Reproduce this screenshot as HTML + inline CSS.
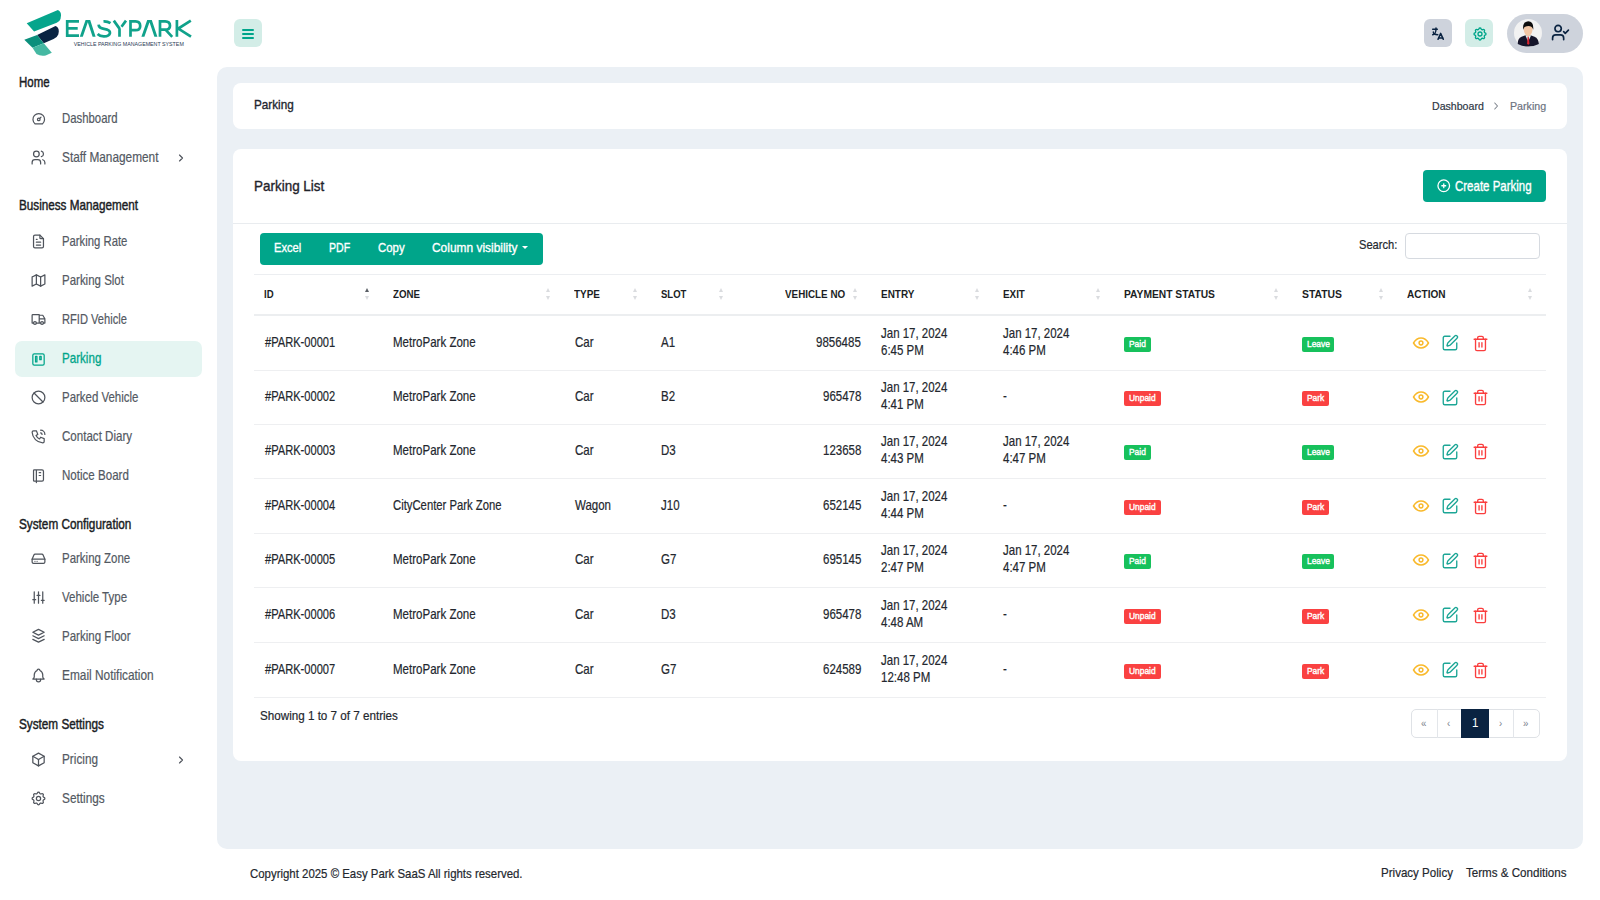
<!DOCTYPE html>
<html><head><meta charset="utf-8"><title>Parking</title>
<style>
html,body{margin:0;padding:0;}
body{width:1600px;height:900px;position:relative;overflow:hidden;background:#fff;font-family:"Liberation Sans",sans-serif;}
.t{position:absolute;white-space:nowrap;line-height:20px;}
svg{display:block;}
</style></head><body>
<svg style="position:absolute;left:0;top:0" width="200" height="64" viewBox="0 0 200 64">
<path d="M26.7 23.3 L57.9 9.9 Q61.3 11.5 61 15.5 L60.5 19 Q59.5 22 56.7 22.8 L34.1 31.6 Z" fill="#06a58c"/>
<path d="M37.1 35 L55.5 26.1 Q58.9 27.5 58.8 31.5 L58.3 34.5 Q57 37.8 53.6 38.9 L43.8 43.2 Z" fill="#0a2442"/>
<path d="M24.3 39.8 L37.1 35 L43.8 43.2 L32.5 47.8 Z" fill="#0b8f7c"/>
<path d="M32.5 47.8 L43.8 43.2 L51.8 52.7 L45.7 55.4 Q40.5 56.5 36.5 53.9 Z" fill="#45b8a2"/>
<g fill="#10a28b">
<path d="M79.8 36.8 L85.6 20.1 L90.2 20.1 L95.6 36.8 L92.6 36.8 L87.8 22.3 L82.8 36.8 Z"/>
<path d="M141.4 36.8 L147.2 20.1 L151.8 20.1 L157.4 36.8 L154.4 36.8 L149.5 22.3 L144.4 36.8 Z"/>
</g>
<g fill="none" stroke="#10a28b" stroke-width="2.7" stroke-linecap="butt" stroke-linejoin="miter">
<path d="M79 21.35 H67.2 V35.55 H79 M67.2 28.4 H77.7"/>
<path d="M103.5 21.4 Q107.5 21.2 110.5 23.2 M98.6 24.6 Q98.8 28.1 104 28.9 Q110.2 29.8 110 33 Q109.3 36.5 103.8 36.4 Q99.8 36.3 97.6 34"/>
<path d="M113.8 20.6 L119.5 28.6 M126 20.6 L121.5 26.8 M119.5 28.2 V36.8"/>
<path d="M130.5 36.8 V21.35 H135.5 Q140.2 21.5 140.2 25.9 Q140.2 30.2 135.5 30.2 H130.5"/>
<path d="M160 36.8 V21.35 H165.2 Q170 21.5 170 25.7 Q170 29.6 165.2 29.6 H160 M165.5 29.6 L172.2 36.8"/>
<path d="M176.9 20.1 V36.8 M190.8 20.6 L178.3 28.6 L191 36.6"/>
</g>
<text x="73.8" y="45.6" font-family="Liberation Sans" font-size="6.1" fill="#2a3a55" textLength="110" lengthAdjust="spacingAndGlyphs">VEHICLE PARKING MANAGEMENT SYSTEM</text>
</svg>
<div style="position:absolute;left:233.5px;top:19px;width:28px;height:28px;background:#d3ede7;border-radius:6px;"></div>
<div style="position:absolute;left:241.5px;top:29.1px;width:12.8px;height:1.8px;background:#00a58a;border-radius:1px;"></div>
<div style="position:absolute;left:241.5px;top:33.300000000000004px;width:12.8px;height:1.8px;background:#00a58a;border-radius:1px;"></div>
<div style="position:absolute;left:241.5px;top:37.4px;width:12.8px;height:1.8px;background:#00a58a;border-radius:1px;"></div>
<div style="position:absolute;left:1423.5px;top:19px;width:28px;height:28px;background:#ced3dc;border-radius:6px;"></div>
<div style="position:absolute;left:1465px;top:19px;width:28px;height:28px;background:#d3ede7;border-radius:6px;"></div>
<div style="position:absolute;left:1507px;top:13.5px;width:76px;height:39.5px;background:#ced3dc;border-radius:20px;"></div>
<svg style="position:absolute;left:1430.00px;top:26.30px" width="16" height="16" viewBox="0 0 24 24" fill="none" stroke="#0a2341" stroke-width="2.2" stroke-linecap="round" stroke-linejoin="round"><path d="M4 5h7"/><path d="M9 3v2c0 4.418 -2.239 8 -5 8"/><path d="M5 9c0 2.144 2.952 3.908 6.7 4"/><path d="M12 20l4 -9l4 9"/><path d="M19.1 18h-6.2"/></svg>
<svg style="position:absolute;left:1471.50px;top:26.00px" width="16" height="16" viewBox="0 0 24 24" fill="none" stroke="#00a58a" stroke-width="2" stroke-linecap="round" stroke-linejoin="round"><path d="M10.325 4.317c.426 -1.756 2.924 -1.756 3.35 0a1.724 1.724 0 0 0 2.573 1.066c1.543 -.94 3.31 .826 2.37 2.37a1.724 1.724 0 0 0 1.065 2.572c1.756 .426 1.756 2.924 0 3.35a1.724 1.724 0 0 0 -1.066 2.573c.94 1.543 -.826 3.31 -2.37 2.37a1.724 1.724 0 0 0 -2.572 1.065c-.426 1.756 -2.924 1.756 -3.35 0a1.724 1.724 0 0 0 -2.573 -1.066c-1.543 .94 -3.31 -.826 -2.37 -2.37a1.724 1.724 0 0 0 -1.065 -2.572c-1.756 -.426 -1.756 -2.924 0 -3.35a1.724 1.724 0 0 0 1.066 -2.573c-.94 -1.543 .826 -3.31 2.37 -2.37c1 .608 2.296 .07 2.572 -1.065z"/><path d="M9 12a3 3 0 1 0 6 0a3 3 0 0 0 -6 0"/></svg>
<svg style="position:absolute;left:1514px;top:19px" width="28" height="28" viewBox="0 0 28 28">
<circle cx="14" cy="14" r="14" fill="#f2f2f2"/>
<path d="M3.8 25 Q3.6 19.5 7.5 17.8 L11.5 16.2 L16.5 16.2 L20.5 17.8 Q24.6 19.5 24.9 25 Q19.5 27.6 14.3 27.6 Q9 27.6 3.8 25 Z" fill="#15142a"/>
<path d="M11.3 16.3 L14.2 22.5 L17.2 16.3 Z" fill="#dff1f3"/>
<path d="M13.6 17.4 L14.8 17.4 L15.4 24.5 L14.2 26 L13.1 24.5 Z" fill="#d7222d"/>
<path d="M9.6 6.5 Q9.2 16 14.2 17.6 Q19.2 16 18.8 6.5 Z" fill="#f2c7a6"/>
<path d="M9.2 10.8 Q8.3 2.6 14.2 2.3 Q20 2.6 19.2 10.8 Q18.6 7 14.2 7 Q9.8 7 9.2 10.8 Z" fill="#0d0d0d"/>
</svg>
<svg style="position:absolute;left:1551.10px;top:23.10px" width="19" height="19" viewBox="0 0 24 24" fill="none" stroke="#0a2341" stroke-width="2.1" stroke-linecap="round" stroke-linejoin="round"><path d="M16 21v-2a4 4 0 0 0-4-4H6a4 4 0 0 0-4 4v2"/><path d="M9 7m-4 0a4 4 0 1 0 8 0a4 4 0 1 0 -8 0"/><path d="m16 11 2 2 4-4"/></svg>
<div style="position:absolute;left:15px;top:341px;width:186.5px;height:35.5px;background:#e5f5f2;border-radius:7px;"></div>
<div class="t" style="left:18.80px;top:71.61px;font-size:14.4px;color:#1a1d24;transform:scaleX(0.7966);transform-origin:0 0;-webkit-text-stroke:0.45px #1a1d24;">Home</div>
<div class="t" style="left:18.80px;top:195.01px;font-size:14.4px;color:#1a1d24;transform:scaleX(0.8124);transform-origin:0 0;-webkit-text-stroke:0.45px #1a1d24;">Business Management</div>
<div class="t" style="left:18.80px;top:513.61px;font-size:14.4px;color:#1a1d24;transform:scaleX(0.8165);transform-origin:0 0;-webkit-text-stroke:0.45px #1a1d24;">System Configuration</div>
<div class="t" style="left:18.80px;top:713.71px;font-size:14.4px;color:#1a1d24;transform:scaleX(0.8160);transform-origin:0 0;-webkit-text-stroke:0.45px #1a1d24;">System Settings</div>
<div class="t" style="left:61.80px;top:108.18px;font-size:14.2px;color:#535962;transform:scaleX(0.8004);transform-origin:0 0;-webkit-text-stroke:0.2px #535962;">Dashboard</div>
<svg style="position:absolute;left:30.75px;top:110.65px" width="15.5" height="15.5" viewBox="0 0 24 24" fill="none" stroke="#4f545c" stroke-width="1.9" stroke-linecap="round" stroke-linejoin="round"><path d="M12 13m-2 0a2 2 0 1 0 4 0a2 2 0 1 0 -4 0"/><path d="M13.45 11.55l2.05 -2.05"/><path d="M6.4 20a9 9 0 1 1 11.2 0z"/></svg>
<div class="t" style="left:61.80px;top:147.18px;font-size:14.2px;color:#535962;transform:scaleX(0.8335);transform-origin:0 0;-webkit-text-stroke:0.2px #535962;">Staff Management</div>
<svg style="position:absolute;left:30.00px;top:149.40px" width="17" height="17" viewBox="0 0 24 24" fill="none" stroke="#4f545c" stroke-width="1.75" stroke-linecap="round" stroke-linejoin="round"><path d="M9 7m-4 0a4 4 0 1 0 8 0a4 4 0 1 0 -8 0"/><path d="M3 21v-2a4 4 0 0 1 4 -4h4a4 4 0 0 1 4 4v2"/><path d="M16 3.13a4 4 0 0 1 0 7.75"/><path d="M21 21v-2a4 4 0 0 0 -3 -3.85"/></svg>
<svg style="position:absolute;left:174.80px;top:152.00px" width="12" height="12" viewBox="0 0 24 24" fill="none" stroke="#4f545c" stroke-width="2.3" stroke-linecap="round" stroke-linejoin="round"><path d="M9 6l6 6l-6 6"/></svg>
<div class="t" style="left:61.80px;top:230.58px;font-size:14.2px;color:#535962;transform:scaleX(0.7967);transform-origin:0 0;-webkit-text-stroke:0.2px #535962;">Parking Rate</div>
<svg style="position:absolute;left:30.00px;top:232.80px" width="17" height="17" viewBox="0 0 24 24" fill="none" stroke="#4f545c" stroke-width="1.75" stroke-linecap="round" stroke-linejoin="round"><path d="M14 3v4a1 1 0 0 0 1 1h4"/><path d="M17 21h-10a2 2 0 0 1 -2 -2v-14a2 2 0 0 1 2 -2h7l5 5v11a2 2 0 0 1 -2 2z"/><path d="M9 9l1 0"/><path d="M9 13l6 0"/><path d="M9 17l6 0"/></svg>
<div class="t" style="left:61.80px;top:269.68px;font-size:14.2px;color:#535962;transform:scaleX(0.8098);transform-origin:0 0;-webkit-text-stroke:0.2px #535962;">Parking Slot</div>
<svg style="position:absolute;left:30.00px;top:271.90px" width="17" height="17" viewBox="0 0 24 24" fill="none" stroke="#4f545c" stroke-width="1.75" stroke-linecap="round" stroke-linejoin="round"><path d="M3 7l6 -3l6 3l6 -3v13l-6 3l-6 -3l-6 3v-13"/><path d="M9 4v13"/><path d="M15 7v13"/></svg>
<div class="t" style="left:61.80px;top:308.68px;font-size:14.2px;color:#535962;transform:scaleX(0.7844);transform-origin:0 0;-webkit-text-stroke:0.2px #535962;">RFID Vehicle</div>
<svg style="position:absolute;left:30.00px;top:310.90px" width="17" height="17" viewBox="0 0 24 24" fill="none" stroke="#4f545c" stroke-width="1.75" stroke-linecap="round" stroke-linejoin="round"><path d="M7 17m-2 0a2 2 0 1 0 4 0a2 2 0 1 0 -4 0"/><path d="M17 17m-2 0a2 2 0 1 0 4 0a2 2 0 1 0 -4 0"/><path d="M5 17h-2v-11a1 1 0 0 1 1 -1h9v12m-4 0h6m4 0h2v-6h-8m0 -5h5l3 5"/></svg>
<div class="t" style="left:61.80px;top:348.08px;font-size:14.2px;color:#00a58a;transform:scaleX(0.8183);transform-origin:0 0;-webkit-text-stroke:0.3px #00a58a;">Parking</div>
<svg style="position:absolute;left:30.00px;top:350.90px" width="17" height="17" viewBox="0 0 24 24" fill="none" stroke="#00a58a" stroke-width="1.75" stroke-linecap="round" stroke-linejoin="round"><path d="M4 4m0 2a2 2 0 0 1 2 -2h12a2 2 0 0 1 2 2v12a2 2 0 0 1 -2 2h-12a2 2 0 0 1 -2 -2z"/><path d="M7.8 7.6h2v7.8h-2z"/><path d="M13.8 7.6h2v4.6h-2z"/></svg>
<div class="t" style="left:61.80px;top:387.18px;font-size:14.2px;color:#535962;transform:scaleX(0.8076);transform-origin:0 0;-webkit-text-stroke:0.2px #535962;">Parked Vehicle</div>
<svg style="position:absolute;left:30.00px;top:389.40px" width="17" height="17" viewBox="0 0 24 24" fill="none" stroke="#4f545c" stroke-width="1.75" stroke-linecap="round" stroke-linejoin="round"><path d="M12 12m-9 0a9 9 0 1 0 18 0a9 9 0 1 0 -18 0"/><path d="M5.7 5.7l12.6 12.6"/></svg>
<div class="t" style="left:61.80px;top:426.18px;font-size:14.2px;color:#535962;transform:scaleX(0.8149);transform-origin:0 0;-webkit-text-stroke:0.2px #535962;">Contact Diary</div>
<svg style="position:absolute;left:30.00px;top:428.40px" width="17" height="17" viewBox="0 0 24 24" fill="none" stroke="#4f545c" stroke-width="1.75" stroke-linecap="round" stroke-linejoin="round"><path d="M5 4h4l2 5l-2.5 1.5a11 11 0 0 0 5 5l1.5 -2.5l5 2v4a2 2 0 0 1 -2 2a16 16 0 0 1 -15 -15a2 2 0 0 1 2 -2"/><path d="M15 7a2 2 0 0 1 2 2"/><path d="M15 3a6 6 0 0 1 6 6"/></svg>
<div class="t" style="left:61.80px;top:465.18px;font-size:14.2px;color:#535962;transform:scaleX(0.8150);transform-origin:0 0;-webkit-text-stroke:0.2px #535962;">Notice Board</div>
<svg style="position:absolute;left:30.00px;top:467.40px" width="17" height="17" viewBox="0 0 24 24" fill="none" stroke="#4f545c" stroke-width="1.75" stroke-linecap="round" stroke-linejoin="round"><path d="M6 4h11a2 2 0 0 1 2 2v12a2 2 0 0 1 -2 2h-11a1 1 0 0 1 -1 -1v-14a1 1 0 0 1 1 -1m3 0v18"/><path d="M13 8l2 0"/><path d="M13 12l2 0"/></svg>
<div class="t" style="left:61.80px;top:548.18px;font-size:14.2px;color:#535962;transform:scaleX(0.8087);transform-origin:0 0;-webkit-text-stroke:0.2px #535962;">Parking Zone</div>
<svg style="position:absolute;left:30.00px;top:550.40px" width="17" height="17" viewBox="0 0 24 24" fill="none" stroke="#4f545c" stroke-width="1.75" stroke-linecap="round" stroke-linejoin="round"><path d="M3 13h18"/><path d="M3 13v4a2 2 0 0 0 2 2h14a2 2 0 0 0 2 -2v-4l-2.5 -6a2 2 0 0 0 -1.8 -1.2h-9.4a2 2 0 0 0 -1.8 1.2z"/><path d="M7 16h.01"/><path d="M10 16h.01"/></svg>
<div class="t" style="left:61.80px;top:587.18px;font-size:14.2px;color:#535962;transform:scaleX(0.8111);transform-origin:0 0;-webkit-text-stroke:0.2px #535962;">Vehicle Type</div>
<svg style="position:absolute;left:30.00px;top:589.40px" width="17" height="17" viewBox="0 0 24 24" fill="none" stroke="#4f545c" stroke-width="1.75" stroke-linecap="round" stroke-linejoin="round"><path d="M6 4v16"/><path d="M12 4v16"/><path d="M18 4v16"/><path d="M4 15h4"/><path d="M10 9h4"/><path d="M16 16h4"/></svg>
<div class="t" style="left:61.80px;top:626.18px;font-size:14.2px;color:#535962;transform:scaleX(0.8135);transform-origin:0 0;-webkit-text-stroke:0.2px #535962;">Parking Floor</div>
<svg style="position:absolute;left:30.00px;top:628.40px" width="17" height="17" viewBox="0 0 24 24" fill="none" stroke="#4f545c" stroke-width="1.75" stroke-linecap="round" stroke-linejoin="round"><path d="M12 2l8 4l-8 4l-8 -4z"/><path d="M4 11l8 4l8 -4"/><path d="M4 16l8 4l8 -4"/></svg>
<div class="t" style="left:61.80px;top:665.18px;font-size:14.2px;color:#535962;transform:scaleX(0.8368);transform-origin:0 0;-webkit-text-stroke:0.2px #535962;">Email Notification</div>
<svg style="position:absolute;left:30.00px;top:667.40px" width="17" height="17" viewBox="0 0 24 24" fill="none" stroke="#4f545c" stroke-width="1.75" stroke-linecap="round" stroke-linejoin="round"><path d="M10 5a2 2 0 1 1 4 0a7 7 0 0 1 4 6v3a4 4 0 0 0 2 3h-16a4 4 0 0 0 2 -3v-3a7 7 0 0 1 4 -6"/><path d="M9 17v1a3 3 0 0 0 6 0v-1"/></svg>
<div class="t" style="left:61.80px;top:749.18px;font-size:14.2px;color:#535962;transform:scaleX(0.8294);transform-origin:0 0;-webkit-text-stroke:0.2px #535962;">Pricing</div>
<svg style="position:absolute;left:30.00px;top:751.40px" width="17" height="17" viewBox="0 0 24 24" fill="none" stroke="#4f545c" stroke-width="1.75" stroke-linecap="round" stroke-linejoin="round"><path d="M12 3l8 4.5l0 9l-8 4.5l-8 -4.5l0 -9l8 -4.5"/><path d="M12 12l8 -4.5"/><path d="M12 12l0 9"/><path d="M12 12l-8 -4.5"/></svg>
<svg style="position:absolute;left:174.80px;top:754.00px" width="12" height="12" viewBox="0 0 24 24" fill="none" stroke="#4f545c" stroke-width="2.3" stroke-linecap="round" stroke-linejoin="round"><path d="M9 6l6 6l-6 6"/></svg>
<div class="t" style="left:61.80px;top:788.18px;font-size:14.2px;color:#535962;transform:scaleX(0.8322);transform-origin:0 0;-webkit-text-stroke:0.2px #535962;">Settings</div>
<svg style="position:absolute;left:30.00px;top:790.40px" width="17" height="17" viewBox="0 0 24 24" fill="none" stroke="#4f545c" stroke-width="1.75" stroke-linecap="round" stroke-linejoin="round"><path d="M10.325 4.317c.426 -1.756 2.924 -1.756 3.35 0a1.724 1.724 0 0 0 2.573 1.066c1.543 -.94 3.31 .826 2.37 2.37a1.724 1.724 0 0 0 1.065 2.572c1.756 .426 1.756 2.924 0 3.35a1.724 1.724 0 0 0 -1.066 2.573c.94 1.543 -.826 3.31 -2.37 2.37a1.724 1.724 0 0 0 -2.572 1.065c-.426 1.756 -2.924 1.756 -3.35 0a1.724 1.724 0 0 0 -2.573 -1.066c-1.543 .94 -3.31 -.826 -2.37 -2.37a1.724 1.724 0 0 0 -1.065 -2.572c-1.756 -.426 -1.756 -2.924 0 -3.35a1.724 1.724 0 0 0 1.066 -2.573c-.94 -1.543 .826 -3.31 2.37 -2.37c1 .608 2.296 .07 2.572 -1.065z"/><path d="M9 12a3 3 0 1 0 6 0a3 3 0 0 0 -6 0"/></svg>
<div style="position:absolute;left:217px;top:67px;width:1366px;height:782px;background:#ebf0f5;border-radius:10px;"></div>
<div style="position:absolute;left:233px;top:83px;width:1334px;height:46px;background:#fff;border-radius:8px;"></div>
<div class="t" style="left:254.40px;top:95.46px;font-size:13.1px;color:#222630;transform:scaleX(0.8938);transform-origin:0 0;-webkit-text-stroke:0.35px #222630;">Parking</div>
<div class="t" style="left:1432.10px;top:96.18px;font-size:11.3px;color:#2d3644;transform:scaleX(0.9371);transform-origin:0 0;-webkit-text-stroke:0.2px #2d3644;">Dashboard</div>
<svg style="position:absolute;left:1490.30px;top:100.10px" width="12" height="12" viewBox="0 0 24 24" fill="none" stroke="#7d838c" stroke-width="2.1" stroke-linecap="round" stroke-linejoin="round"><path d="M9.5 6l5.5 6l-5.5 6"/></svg>
<div class="t" style="left:1509.50px;top:96.18px;font-size:11.3px;color:#6c737f;transform:scaleX(0.9422);transform-origin:0 0;-webkit-text-stroke:0.2px #6c737f;">Parking</div>
<div style="position:absolute;left:233px;top:149px;width:1334px;height:612px;background:#fff;border-radius:8px;"></div>
<div class="t" style="left:254.40px;top:175.98px;font-size:14.5px;color:#1f232b;transform:scaleX(0.9280);transform-origin:0 0;-webkit-text-stroke:0.35px #1f232b;">Parking List</div>
<div style="position:absolute;left:1422.5px;top:170px;width:123.5px;height:32px;background:#00a58a;border-radius:4px;"></div>
<svg style="position:absolute;left:1436.45px;top:177.95px" width="15.5" height="15.5" viewBox="0 0 24 24" fill="none" stroke="#fff" stroke-width="2" stroke-linecap="round" stroke-linejoin="round"><path d="M3 12a9 9 0 1 0 18 0a9 9 0 0 0 -18 0"/><path d="M9 12h6"/><path d="M12 9v6"/></svg>
<div class="t" style="left:1455.00px;top:176.48px;font-size:14.2px;color:#fff;transform:scaleX(0.8098);transform-origin:0 0;-webkit-text-stroke:0.35px #fff;">Create Parking</div>
<div style="position:absolute;left:233px;top:223px;width:1334px;height:1px;background:#e9ecef;"></div>
<div style="position:absolute;left:260px;top:232.5px;width:282.5px;height:32.5px;background:#00a58a;border-radius:4px;"></div>
<div class="t" style="left:274.40px;top:237.96px;font-size:13.4px;color:#fff;transform:scaleX(0.8301);transform-origin:0 0;-webkit-text-stroke:0.35px #fff;">Excel</div>
<div class="t" style="left:329.40px;top:237.96px;font-size:13.4px;color:#fff;transform:scaleX(0.7910);transform-origin:0 0;-webkit-text-stroke:0.35px #fff;">PDF</div>
<div class="t" style="left:378.40px;top:237.96px;font-size:13.4px;color:#fff;transform:scaleX(0.8503);transform-origin:0 0;-webkit-text-stroke:0.35px #fff;">Copy</div>
<div class="t" style="left:432.40px;top:237.96px;font-size:13.4px;color:#fff;transform:scaleX(0.8911);transform-origin:0 0;-webkit-text-stroke:0.35px #fff;">Column visibility</div>
<div style="position:absolute;left:522px;top:246px;width:0;height:0;border-left:3.3px solid transparent;border-right:3.3px solid transparent;border-top:3.5px solid #fff;"></div>
<div class="t" style="left:1359.00px;top:234.80px;font-size:12.7px;color:#23272e;transform:scaleX(0.8774);transform-origin:0 0;-webkit-text-stroke:0.2px #23272e;">Search:</div>
<div style="position:absolute;left:1404.5px;top:232.5px;width:135px;height:26px;box-sizing:border-box;border:1px solid #d6dae0;border-radius:4px;background:#fff;"></div>
<div style="position:absolute;left:254px;top:273.5px;width:1292px;height:1px;background:#eceef1;"></div>
<div style="position:absolute;left:254px;top:314px;width:1292px;height:2px;background:#eceef0;"></div>
<div class="t" style="left:263.90px;top:283.72px;font-size:10.9px;font-weight:700;color:#1b1e24;transform:scaleX(0.8807);transform-origin:0 0;">ID</div>
<div style="position:absolute;left:365.3px;top:288.3px;width:0;height:0;border-left:2.7px solid transparent;border-right:2.7px solid transparent;border-bottom:4.8px solid #5a5f66;"></div>
<div style="position:absolute;left:365.3px;top:295.8px;width:0;height:0;border-left:2.7px solid transparent;border-right:2.7px solid transparent;border-top:4.8px solid #dadcdf;"></div>
<div class="t" style="left:392.90px;top:283.72px;font-size:10.9px;font-weight:700;color:#1b1e24;transform:scaleX(0.8917);transform-origin:0 0;">ZONE</div>
<div style="position:absolute;left:546.3px;top:288.3px;width:0;height:0;border-left:2.7px solid transparent;border-right:2.7px solid transparent;border-bottom:4.8px solid #dadcdf;"></div>
<div style="position:absolute;left:546.3px;top:295.8px;width:0;height:0;border-left:2.7px solid transparent;border-right:2.7px solid transparent;border-top:4.8px solid #dadcdf;"></div>
<div class="t" style="left:573.90px;top:283.72px;font-size:10.9px;font-weight:700;color:#1b1e24;transform:scaleX(0.9133);transform-origin:0 0;">TYPE</div>
<div style="position:absolute;left:633.3px;top:288.3px;width:0;height:0;border-left:2.7px solid transparent;border-right:2.7px solid transparent;border-bottom:4.8px solid #dadcdf;"></div>
<div style="position:absolute;left:633.3px;top:295.8px;width:0;height:0;border-left:2.7px solid transparent;border-right:2.7px solid transparent;border-top:4.8px solid #dadcdf;"></div>
<div class="t" style="left:660.90px;top:283.72px;font-size:10.9px;font-weight:700;color:#1b1e24;transform:scaleX(0.8739);transform-origin:0 0;">SLOT</div>
<div style="position:absolute;left:719.3px;top:288.3px;width:0;height:0;border-left:2.7px solid transparent;border-right:2.7px solid transparent;border-bottom:4.8px solid #dadcdf;"></div>
<div style="position:absolute;left:719.3px;top:295.8px;width:0;height:0;border-left:2.7px solid transparent;border-right:2.7px solid transparent;border-top:4.8px solid #dadcdf;"></div>
<div class="t" style="left:785.40px;top:283.72px;font-size:10.9px;font-weight:700;color:#1b1e24;transform:scaleX(0.9036);transform-origin:0 0;">VEHICLE NO</div>
<div style="position:absolute;left:853.3px;top:288.3px;width:0;height:0;border-left:2.7px solid transparent;border-right:2.7px solid transparent;border-bottom:4.8px solid #dadcdf;"></div>
<div style="position:absolute;left:853.3px;top:295.8px;width:0;height:0;border-left:2.7px solid transparent;border-right:2.7px solid transparent;border-top:4.8px solid #dadcdf;"></div>
<div class="t" style="left:880.90px;top:283.72px;font-size:10.9px;font-weight:700;color:#1b1e24;transform:scaleX(0.9141);transform-origin:0 0;">ENTRY</div>
<div style="position:absolute;left:975.3px;top:288.3px;width:0;height:0;border-left:2.7px solid transparent;border-right:2.7px solid transparent;border-bottom:4.8px solid #dadcdf;"></div>
<div style="position:absolute;left:975.3px;top:295.8px;width:0;height:0;border-left:2.7px solid transparent;border-right:2.7px solid transparent;border-top:4.8px solid #dadcdf;"></div>
<div class="t" style="left:1002.90px;top:283.72px;font-size:10.9px;font-weight:700;color:#1b1e24;transform:scaleX(0.9040);transform-origin:0 0;">EXIT</div>
<div style="position:absolute;left:1096.3px;top:288.3px;width:0;height:0;border-left:2.7px solid transparent;border-right:2.7px solid transparent;border-bottom:4.8px solid #dadcdf;"></div>
<div style="position:absolute;left:1096.3px;top:295.8px;width:0;height:0;border-left:2.7px solid transparent;border-right:2.7px solid transparent;border-top:4.8px solid #dadcdf;"></div>
<div class="t" style="left:1123.90px;top:283.72px;font-size:10.9px;font-weight:700;color:#1b1e24;transform:scaleX(0.9431);transform-origin:0 0;">PAYMENT STATUS</div>
<div style="position:absolute;left:1274.3px;top:288.3px;width:0;height:0;border-left:2.7px solid transparent;border-right:2.7px solid transparent;border-bottom:4.8px solid #dadcdf;"></div>
<div style="position:absolute;left:1274.3px;top:295.8px;width:0;height:0;border-left:2.7px solid transparent;border-right:2.7px solid transparent;border-top:4.8px solid #dadcdf;"></div>
<div class="t" style="left:1301.90px;top:283.72px;font-size:10.9px;font-weight:700;color:#1b1e24;transform:scaleX(0.9528);transform-origin:0 0;">STATUS</div>
<div style="position:absolute;left:1379.3px;top:288.3px;width:0;height:0;border-left:2.7px solid transparent;border-right:2.7px solid transparent;border-bottom:4.8px solid #dadcdf;"></div>
<div style="position:absolute;left:1379.3px;top:295.8px;width:0;height:0;border-left:2.7px solid transparent;border-right:2.7px solid transparent;border-top:4.8px solid #dadcdf;"></div>
<div class="t" style="left:1406.90px;top:283.72px;font-size:10.9px;font-weight:700;color:#1b1e24;transform:scaleX(0.9239);transform-origin:0 0;">ACTION</div>
<div style="position:absolute;left:1528.3px;top:288.3px;width:0;height:0;border-left:2.7px solid transparent;border-right:2.7px solid transparent;border-bottom:4.8px solid #dadcdf;"></div>
<div style="position:absolute;left:1528.3px;top:295.8px;width:0;height:0;border-left:2.7px solid transparent;border-right:2.7px solid transparent;border-top:4.8px solid #dadcdf;"></div>
<div class="t" style="left:264.50px;top:331.80px;font-size:14.3px;color:#23272e;transform:scaleX(0.7769);transform-origin:0 0;-webkit-text-stroke:0.2px #23272e;">#PARK-00001</div>
<div class="t" style="left:393.00px;top:331.80px;font-size:14.3px;color:#23272e;transform:scaleX(0.8067);transform-origin:0 0;-webkit-text-stroke:0.2px #23272e;">MetroPark Zone</div>
<div class="t" style="left:574.50px;top:331.80px;font-size:14.3px;color:#23272e;transform:scaleX(0.8045);transform-origin:0 0;-webkit-text-stroke:0.2px #23272e;">Car</div>
<div class="t" style="left:661.00px;top:331.80px;font-size:14.3px;color:#23272e;transform:scaleX(0.8045);transform-origin:0 0;-webkit-text-stroke:0.2px #23272e;">A1</div>
<div class="t" style="left:816.21px;top:331.80px;font-size:14.3px;color:#23272e;transform:scaleX(0.8045);transform-origin:0 0;-webkit-text-stroke:0.2px #23272e;">9856485</div>
<div class="t" style="left:881.00px;top:322.80px;font-size:14.3px;color:#23272e;transform:scaleX(0.8030);transform-origin:0 0;-webkit-text-stroke:0.2px #23272e;">Jan 17, 2024</div>
<div class="t" style="left:881.00px;top:339.80px;font-size:14.3px;color:#23272e;transform:scaleX(0.8045);transform-origin:0 0;-webkit-text-stroke:0.2px #23272e;">6:45 PM</div>
<div class="t" style="left:1003.00px;top:322.80px;font-size:14.3px;color:#23272e;transform:scaleX(0.8030);transform-origin:0 0;-webkit-text-stroke:0.2px #23272e;">Jan 17, 2024</div>
<div class="t" style="left:1003.00px;top:339.80px;font-size:14.3px;color:#23272e;transform:scaleX(0.8045);transform-origin:0 0;-webkit-text-stroke:0.2px #23272e;">4:46 PM</div>
<div style="position:absolute;left:254px;top:370px;width:1292px;height:1px;background:#eeeff1;"></div>
<div style="position:absolute;left:1124px;top:336.95px;width:27px;height:15px;background:#17c15c;border-radius:2px;"></div>
<div class="t" style="left:1129.09px;top:334.06px;font-size:9.5px;color:#fff;transform:scaleX(0.8850);transform-origin:0 0;-webkit-text-stroke:0.4px #fff;">Paid</div>
<div style="position:absolute;left:1302px;top:336.95px;width:32.2px;height:15px;background:#17c15c;border-radius:2px;"></div>
<div class="t" style="left:1306.65px;top:334.06px;font-size:9.5px;color:#fff;transform:scaleX(0.8850);transform-origin:0 0;-webkit-text-stroke:0.4px #fff;">Leave</div>
<svg style="position:absolute;left:1410.80px;top:333.15px" width="20" height="20" viewBox="0 0 24 24" fill="none" stroke="#f9b92b" stroke-width="1.8" stroke-linecap="round" stroke-linejoin="round"><path d="M9.7 12a2.3 2.3 0 1 0 4.6 0a2.3 2.3 0 0 0 -4.6 0"/><path d="M21 12c-2.4 4 -5.4 6 -9 6c-3.6 0 -6.6 -2 -9 -6c2.4 -4 5.4 -6 9 -6c3.6 0 6.6 2 9 6"/></svg>
<svg style="position:absolute;left:1440.80px;top:334.25px" width="18" height="18" viewBox="0 0 24 24" fill="none" stroke="#1ca696" stroke-width="1.8" stroke-linecap="round" stroke-linejoin="round"><path d="M12 3H5a2 2 0 0 0-2 2v14a2 2 0 0 0 2 2h14a2 2 0 0 0 2-2v-7"/><path d="M18.375 2.625a1 1 0 0 1 3 3l-9.013 9.014a2 2 0 0 1-.853.505l-2.873.84a.5.5 0 0 1-.62-.62l.84-2.873a2 2 0 0 1 .506-.852z"/></svg>
<svg style="position:absolute;left:1471.50px;top:334.85px" width="17" height="17" viewBox="0 0 24 24" fill="none" stroke="#fa3e3e" stroke-width="1.9" stroke-linecap="round" stroke-linejoin="round"><path d="M3 6h18"/><path d="M19 6v14c0 1-1 2-2 2H7c-1 0-2-1-2-2V6"/><path d="M8 6V4c0-1 1-2 2-2h4c1 0 2 1 2 2v2"/><path d="M10 11v6"/><path d="M14 11v6"/></svg>
<div class="t" style="left:264.50px;top:386.05px;font-size:14.3px;color:#23272e;transform:scaleX(0.7769);transform-origin:0 0;-webkit-text-stroke:0.2px #23272e;">#PARK-00002</div>
<div class="t" style="left:393.00px;top:386.05px;font-size:14.3px;color:#23272e;transform:scaleX(0.8067);transform-origin:0 0;-webkit-text-stroke:0.2px #23272e;">MetroPark Zone</div>
<div class="t" style="left:574.50px;top:386.05px;font-size:14.3px;color:#23272e;transform:scaleX(0.8045);transform-origin:0 0;-webkit-text-stroke:0.2px #23272e;">Car</div>
<div class="t" style="left:661.00px;top:386.05px;font-size:14.3px;color:#23272e;transform:scaleX(0.8045);transform-origin:0 0;-webkit-text-stroke:0.2px #23272e;">B2</div>
<div class="t" style="left:822.61px;top:386.05px;font-size:14.3px;color:#23272e;transform:scaleX(0.8045);transform-origin:0 0;-webkit-text-stroke:0.2px #23272e;">965478</div>
<div class="t" style="left:881.00px;top:377.05px;font-size:14.3px;color:#23272e;transform:scaleX(0.8030);transform-origin:0 0;-webkit-text-stroke:0.2px #23272e;">Jan 17, 2024</div>
<div class="t" style="left:881.00px;top:394.05px;font-size:14.3px;color:#23272e;transform:scaleX(0.8045);transform-origin:0 0;-webkit-text-stroke:0.2px #23272e;">4:41 PM</div>
<div class="t" style="left:1003.00px;top:386.05px;font-size:14.3px;color:#23272e;transform:scaleX(0.8046);transform-origin:0 0;-webkit-text-stroke:0.2px #23272e;">-</div>
<div style="position:absolute;left:254px;top:424px;width:1292px;height:1px;background:#eeeff1;"></div>
<div style="position:absolute;left:1124px;top:391.2px;width:37px;height:15px;background:#fa4141;border-radius:2px;"></div>
<div class="t" style="left:1129.18px;top:388.31px;font-size:9.5px;color:#fff;transform:scaleX(0.8850);transform-origin:0 0;-webkit-text-stroke:0.4px #fff;">Unpaid</div>
<div style="position:absolute;left:1302px;top:391.2px;width:26.5px;height:15px;background:#fa4141;border-radius:2px;"></div>
<div class="t" style="left:1306.61px;top:388.31px;font-size:9.5px;color:#fff;transform:scaleX(0.8850);transform-origin:0 0;-webkit-text-stroke:0.4px #fff;">Park</div>
<svg style="position:absolute;left:1410.80px;top:387.40px" width="20" height="20" viewBox="0 0 24 24" fill="none" stroke="#f9b92b" stroke-width="1.8" stroke-linecap="round" stroke-linejoin="round"><path d="M9.7 12a2.3 2.3 0 1 0 4.6 0a2.3 2.3 0 0 0 -4.6 0"/><path d="M21 12c-2.4 4 -5.4 6 -9 6c-3.6 0 -6.6 -2 -9 -6c2.4 -4 5.4 -6 9 -6c3.6 0 6.6 2 9 6"/></svg>
<svg style="position:absolute;left:1440.80px;top:388.50px" width="18" height="18" viewBox="0 0 24 24" fill="none" stroke="#1ca696" stroke-width="1.8" stroke-linecap="round" stroke-linejoin="round"><path d="M12 3H5a2 2 0 0 0-2 2v14a2 2 0 0 0 2 2h14a2 2 0 0 0 2-2v-7"/><path d="M18.375 2.625a1 1 0 0 1 3 3l-9.013 9.014a2 2 0 0 1-.853.505l-2.873.84a.5.5 0 0 1-.62-.62l.84-2.873a2 2 0 0 1 .506-.852z"/></svg>
<svg style="position:absolute;left:1471.50px;top:389.10px" width="17" height="17" viewBox="0 0 24 24" fill="none" stroke="#fa3e3e" stroke-width="1.9" stroke-linecap="round" stroke-linejoin="round"><path d="M3 6h18"/><path d="M19 6v14c0 1-1 2-2 2H7c-1 0-2-1-2-2V6"/><path d="M8 6V4c0-1 1-2 2-2h4c1 0 2 1 2 2v2"/><path d="M10 11v6"/><path d="M14 11v6"/></svg>
<div class="t" style="left:264.50px;top:440.05px;font-size:14.3px;color:#23272e;transform:scaleX(0.7769);transform-origin:0 0;-webkit-text-stroke:0.2px #23272e;">#PARK-00003</div>
<div class="t" style="left:393.00px;top:440.05px;font-size:14.3px;color:#23272e;transform:scaleX(0.8067);transform-origin:0 0;-webkit-text-stroke:0.2px #23272e;">MetroPark Zone</div>
<div class="t" style="left:574.50px;top:440.05px;font-size:14.3px;color:#23272e;transform:scaleX(0.8045);transform-origin:0 0;-webkit-text-stroke:0.2px #23272e;">Car</div>
<div class="t" style="left:661.00px;top:440.05px;font-size:14.3px;color:#23272e;transform:scaleX(0.8045);transform-origin:0 0;-webkit-text-stroke:0.2px #23272e;">D3</div>
<div class="t" style="left:822.61px;top:440.05px;font-size:14.3px;color:#23272e;transform:scaleX(0.8045);transform-origin:0 0;-webkit-text-stroke:0.2px #23272e;">123658</div>
<div class="t" style="left:881.00px;top:431.05px;font-size:14.3px;color:#23272e;transform:scaleX(0.8030);transform-origin:0 0;-webkit-text-stroke:0.2px #23272e;">Jan 17, 2024</div>
<div class="t" style="left:881.00px;top:448.05px;font-size:14.3px;color:#23272e;transform:scaleX(0.8045);transform-origin:0 0;-webkit-text-stroke:0.2px #23272e;">4:43 PM</div>
<div class="t" style="left:1003.00px;top:431.05px;font-size:14.3px;color:#23272e;transform:scaleX(0.8030);transform-origin:0 0;-webkit-text-stroke:0.2px #23272e;">Jan 17, 2024</div>
<div class="t" style="left:1003.00px;top:448.05px;font-size:14.3px;color:#23272e;transform:scaleX(0.8045);transform-origin:0 0;-webkit-text-stroke:0.2px #23272e;">4:47 PM</div>
<div style="position:absolute;left:254px;top:478px;width:1292px;height:1px;background:#eeeff1;"></div>
<div style="position:absolute;left:1124px;top:445.2px;width:27px;height:15px;background:#17c15c;border-radius:2px;"></div>
<div class="t" style="left:1129.09px;top:442.31px;font-size:9.5px;color:#fff;transform:scaleX(0.8850);transform-origin:0 0;-webkit-text-stroke:0.4px #fff;">Paid</div>
<div style="position:absolute;left:1302px;top:445.2px;width:32.2px;height:15px;background:#17c15c;border-radius:2px;"></div>
<div class="t" style="left:1306.65px;top:442.31px;font-size:9.5px;color:#fff;transform:scaleX(0.8850);transform-origin:0 0;-webkit-text-stroke:0.4px #fff;">Leave</div>
<svg style="position:absolute;left:1410.80px;top:441.40px" width="20" height="20" viewBox="0 0 24 24" fill="none" stroke="#f9b92b" stroke-width="1.8" stroke-linecap="round" stroke-linejoin="round"><path d="M9.7 12a2.3 2.3 0 1 0 4.6 0a2.3 2.3 0 0 0 -4.6 0"/><path d="M21 12c-2.4 4 -5.4 6 -9 6c-3.6 0 -6.6 -2 -9 -6c2.4 -4 5.4 -6 9 -6c3.6 0 6.6 2 9 6"/></svg>
<svg style="position:absolute;left:1440.80px;top:442.50px" width="18" height="18" viewBox="0 0 24 24" fill="none" stroke="#1ca696" stroke-width="1.8" stroke-linecap="round" stroke-linejoin="round"><path d="M12 3H5a2 2 0 0 0-2 2v14a2 2 0 0 0 2 2h14a2 2 0 0 0 2-2v-7"/><path d="M18.375 2.625a1 1 0 0 1 3 3l-9.013 9.014a2 2 0 0 1-.853.505l-2.873.84a.5.5 0 0 1-.62-.62l.84-2.873a2 2 0 0 1 .506-.852z"/></svg>
<svg style="position:absolute;left:1471.50px;top:443.10px" width="17" height="17" viewBox="0 0 24 24" fill="none" stroke="#fa3e3e" stroke-width="1.9" stroke-linecap="round" stroke-linejoin="round"><path d="M3 6h18"/><path d="M19 6v14c0 1-1 2-2 2H7c-1 0-2-1-2-2V6"/><path d="M8 6V4c0-1 1-2 2-2h4c1 0 2 1 2 2v2"/><path d="M10 11v6"/><path d="M14 11v6"/></svg>
<div class="t" style="left:264.50px;top:494.55px;font-size:14.3px;color:#23272e;transform:scaleX(0.7769);transform-origin:0 0;-webkit-text-stroke:0.2px #23272e;">#PARK-00004</div>
<div class="t" style="left:393.00px;top:494.55px;font-size:14.3px;color:#23272e;transform:scaleX(0.7899);transform-origin:0 0;-webkit-text-stroke:0.2px #23272e;">CityCenter Park Zone</div>
<div class="t" style="left:574.50px;top:494.55px;font-size:14.3px;color:#23272e;transform:scaleX(0.8045);transform-origin:0 0;-webkit-text-stroke:0.2px #23272e;">Wagon</div>
<div class="t" style="left:661.00px;top:494.55px;font-size:14.3px;color:#23272e;transform:scaleX(0.8045);transform-origin:0 0;-webkit-text-stroke:0.2px #23272e;">J10</div>
<div class="t" style="left:822.61px;top:494.55px;font-size:14.3px;color:#23272e;transform:scaleX(0.8045);transform-origin:0 0;-webkit-text-stroke:0.2px #23272e;">652145</div>
<div class="t" style="left:881.00px;top:485.55px;font-size:14.3px;color:#23272e;transform:scaleX(0.8030);transform-origin:0 0;-webkit-text-stroke:0.2px #23272e;">Jan 17, 2024</div>
<div class="t" style="left:881.00px;top:502.55px;font-size:14.3px;color:#23272e;transform:scaleX(0.8045);transform-origin:0 0;-webkit-text-stroke:0.2px #23272e;">4:44 PM</div>
<div class="t" style="left:1003.00px;top:494.55px;font-size:14.3px;color:#23272e;transform:scaleX(0.8046);transform-origin:0 0;-webkit-text-stroke:0.2px #23272e;">-</div>
<div style="position:absolute;left:254px;top:533px;width:1292px;height:1px;background:#eeeff1;"></div>
<div style="position:absolute;left:1124px;top:499.7px;width:37px;height:15px;background:#fa4141;border-radius:2px;"></div>
<div class="t" style="left:1129.18px;top:496.81px;font-size:9.5px;color:#fff;transform:scaleX(0.8850);transform-origin:0 0;-webkit-text-stroke:0.4px #fff;">Unpaid</div>
<div style="position:absolute;left:1302px;top:499.7px;width:26.5px;height:15px;background:#fa4141;border-radius:2px;"></div>
<div class="t" style="left:1306.61px;top:496.81px;font-size:9.5px;color:#fff;transform:scaleX(0.8850);transform-origin:0 0;-webkit-text-stroke:0.4px #fff;">Park</div>
<svg style="position:absolute;left:1410.80px;top:495.90px" width="20" height="20" viewBox="0 0 24 24" fill="none" stroke="#f9b92b" stroke-width="1.8" stroke-linecap="round" stroke-linejoin="round"><path d="M9.7 12a2.3 2.3 0 1 0 4.6 0a2.3 2.3 0 0 0 -4.6 0"/><path d="M21 12c-2.4 4 -5.4 6 -9 6c-3.6 0 -6.6 -2 -9 -6c2.4 -4 5.4 -6 9 -6c3.6 0 6.6 2 9 6"/></svg>
<svg style="position:absolute;left:1440.80px;top:497.00px" width="18" height="18" viewBox="0 0 24 24" fill="none" stroke="#1ca696" stroke-width="1.8" stroke-linecap="round" stroke-linejoin="round"><path d="M12 3H5a2 2 0 0 0-2 2v14a2 2 0 0 0 2 2h14a2 2 0 0 0 2-2v-7"/><path d="M18.375 2.625a1 1 0 0 1 3 3l-9.013 9.014a2 2 0 0 1-.853.505l-2.873.84a.5.5 0 0 1-.62-.62l.84-2.873a2 2 0 0 1 .506-.852z"/></svg>
<svg style="position:absolute;left:1471.50px;top:497.60px" width="17" height="17" viewBox="0 0 24 24" fill="none" stroke="#fa3e3e" stroke-width="1.9" stroke-linecap="round" stroke-linejoin="round"><path d="M3 6h18"/><path d="M19 6v14c0 1-1 2-2 2H7c-1 0-2-1-2-2V6"/><path d="M8 6V4c0-1 1-2 2-2h4c1 0 2 1 2 2v2"/><path d="M10 11v6"/><path d="M14 11v6"/></svg>
<div class="t" style="left:264.50px;top:549.05px;font-size:14.3px;color:#23272e;transform:scaleX(0.7769);transform-origin:0 0;-webkit-text-stroke:0.2px #23272e;">#PARK-00005</div>
<div class="t" style="left:393.00px;top:549.05px;font-size:14.3px;color:#23272e;transform:scaleX(0.8067);transform-origin:0 0;-webkit-text-stroke:0.2px #23272e;">MetroPark Zone</div>
<div class="t" style="left:574.50px;top:549.05px;font-size:14.3px;color:#23272e;transform:scaleX(0.8045);transform-origin:0 0;-webkit-text-stroke:0.2px #23272e;">Car</div>
<div class="t" style="left:661.00px;top:549.05px;font-size:14.3px;color:#23272e;transform:scaleX(0.8045);transform-origin:0 0;-webkit-text-stroke:0.2px #23272e;">G7</div>
<div class="t" style="left:822.61px;top:549.05px;font-size:14.3px;color:#23272e;transform:scaleX(0.8045);transform-origin:0 0;-webkit-text-stroke:0.2px #23272e;">695145</div>
<div class="t" style="left:881.00px;top:540.05px;font-size:14.3px;color:#23272e;transform:scaleX(0.8030);transform-origin:0 0;-webkit-text-stroke:0.2px #23272e;">Jan 17, 2024</div>
<div class="t" style="left:881.00px;top:557.05px;font-size:14.3px;color:#23272e;transform:scaleX(0.8045);transform-origin:0 0;-webkit-text-stroke:0.2px #23272e;">2:47 PM</div>
<div class="t" style="left:1003.00px;top:540.05px;font-size:14.3px;color:#23272e;transform:scaleX(0.8030);transform-origin:0 0;-webkit-text-stroke:0.2px #23272e;">Jan 17, 2024</div>
<div class="t" style="left:1003.00px;top:557.05px;font-size:14.3px;color:#23272e;transform:scaleX(0.8045);transform-origin:0 0;-webkit-text-stroke:0.2px #23272e;">4:47 PM</div>
<div style="position:absolute;left:254px;top:587px;width:1292px;height:1px;background:#eeeff1;"></div>
<div style="position:absolute;left:1124px;top:554.2px;width:27px;height:15px;background:#17c15c;border-radius:2px;"></div>
<div class="t" style="left:1129.09px;top:551.31px;font-size:9.5px;color:#fff;transform:scaleX(0.8850);transform-origin:0 0;-webkit-text-stroke:0.4px #fff;">Paid</div>
<div style="position:absolute;left:1302px;top:554.2px;width:32.2px;height:15px;background:#17c15c;border-radius:2px;"></div>
<div class="t" style="left:1306.65px;top:551.31px;font-size:9.5px;color:#fff;transform:scaleX(0.8850);transform-origin:0 0;-webkit-text-stroke:0.4px #fff;">Leave</div>
<svg style="position:absolute;left:1410.80px;top:550.40px" width="20" height="20" viewBox="0 0 24 24" fill="none" stroke="#f9b92b" stroke-width="1.8" stroke-linecap="round" stroke-linejoin="round"><path d="M9.7 12a2.3 2.3 0 1 0 4.6 0a2.3 2.3 0 0 0 -4.6 0"/><path d="M21 12c-2.4 4 -5.4 6 -9 6c-3.6 0 -6.6 -2 -9 -6c2.4 -4 5.4 -6 9 -6c3.6 0 6.6 2 9 6"/></svg>
<svg style="position:absolute;left:1440.80px;top:551.50px" width="18" height="18" viewBox="0 0 24 24" fill="none" stroke="#1ca696" stroke-width="1.8" stroke-linecap="round" stroke-linejoin="round"><path d="M12 3H5a2 2 0 0 0-2 2v14a2 2 0 0 0 2 2h14a2 2 0 0 0 2-2v-7"/><path d="M18.375 2.625a1 1 0 0 1 3 3l-9.013 9.014a2 2 0 0 1-.853.505l-2.873.84a.5.5 0 0 1-.62-.62l.84-2.873a2 2 0 0 1 .506-.852z"/></svg>
<svg style="position:absolute;left:1471.50px;top:552.10px" width="17" height="17" viewBox="0 0 24 24" fill="none" stroke="#fa3e3e" stroke-width="1.9" stroke-linecap="round" stroke-linejoin="round"><path d="M3 6h18"/><path d="M19 6v14c0 1-1 2-2 2H7c-1 0-2-1-2-2V6"/><path d="M8 6V4c0-1 1-2 2-2h4c1 0 2 1 2 2v2"/><path d="M10 11v6"/><path d="M14 11v6"/></svg>
<div class="t" style="left:264.50px;top:603.55px;font-size:14.3px;color:#23272e;transform:scaleX(0.7769);transform-origin:0 0;-webkit-text-stroke:0.2px #23272e;">#PARK-00006</div>
<div class="t" style="left:393.00px;top:603.55px;font-size:14.3px;color:#23272e;transform:scaleX(0.8067);transform-origin:0 0;-webkit-text-stroke:0.2px #23272e;">MetroPark Zone</div>
<div class="t" style="left:574.50px;top:603.55px;font-size:14.3px;color:#23272e;transform:scaleX(0.8045);transform-origin:0 0;-webkit-text-stroke:0.2px #23272e;">Car</div>
<div class="t" style="left:661.00px;top:603.55px;font-size:14.3px;color:#23272e;transform:scaleX(0.8045);transform-origin:0 0;-webkit-text-stroke:0.2px #23272e;">D3</div>
<div class="t" style="left:822.61px;top:603.55px;font-size:14.3px;color:#23272e;transform:scaleX(0.8045);transform-origin:0 0;-webkit-text-stroke:0.2px #23272e;">965478</div>
<div class="t" style="left:881.00px;top:594.55px;font-size:14.3px;color:#23272e;transform:scaleX(0.8030);transform-origin:0 0;-webkit-text-stroke:0.2px #23272e;">Jan 17, 2024</div>
<div class="t" style="left:881.00px;top:611.55px;font-size:14.3px;color:#23272e;transform:scaleX(0.8045);transform-origin:0 0;-webkit-text-stroke:0.2px #23272e;">4:48 AM</div>
<div class="t" style="left:1003.00px;top:603.55px;font-size:14.3px;color:#23272e;transform:scaleX(0.8046);transform-origin:0 0;-webkit-text-stroke:0.2px #23272e;">-</div>
<div style="position:absolute;left:254px;top:642px;width:1292px;height:1px;background:#eeeff1;"></div>
<div style="position:absolute;left:1124px;top:608.7px;width:37px;height:15px;background:#fa4141;border-radius:2px;"></div>
<div class="t" style="left:1129.18px;top:605.81px;font-size:9.5px;color:#fff;transform:scaleX(0.8850);transform-origin:0 0;-webkit-text-stroke:0.4px #fff;">Unpaid</div>
<div style="position:absolute;left:1302px;top:608.7px;width:26.5px;height:15px;background:#fa4141;border-radius:2px;"></div>
<div class="t" style="left:1306.61px;top:605.81px;font-size:9.5px;color:#fff;transform:scaleX(0.8850);transform-origin:0 0;-webkit-text-stroke:0.4px #fff;">Park</div>
<svg style="position:absolute;left:1410.80px;top:604.90px" width="20" height="20" viewBox="0 0 24 24" fill="none" stroke="#f9b92b" stroke-width="1.8" stroke-linecap="round" stroke-linejoin="round"><path d="M9.7 12a2.3 2.3 0 1 0 4.6 0a2.3 2.3 0 0 0 -4.6 0"/><path d="M21 12c-2.4 4 -5.4 6 -9 6c-3.6 0 -6.6 -2 -9 -6c2.4 -4 5.4 -6 9 -6c3.6 0 6.6 2 9 6"/></svg>
<svg style="position:absolute;left:1440.80px;top:606.00px" width="18" height="18" viewBox="0 0 24 24" fill="none" stroke="#1ca696" stroke-width="1.8" stroke-linecap="round" stroke-linejoin="round"><path d="M12 3H5a2 2 0 0 0-2 2v14a2 2 0 0 0 2 2h14a2 2 0 0 0 2-2v-7"/><path d="M18.375 2.625a1 1 0 0 1 3 3l-9.013 9.014a2 2 0 0 1-.853.505l-2.873.84a.5.5 0 0 1-.62-.62l.84-2.873a2 2 0 0 1 .506-.852z"/></svg>
<svg style="position:absolute;left:1471.50px;top:606.60px" width="17" height="17" viewBox="0 0 24 24" fill="none" stroke="#fa3e3e" stroke-width="1.9" stroke-linecap="round" stroke-linejoin="round"><path d="M3 6h18"/><path d="M19 6v14c0 1-1 2-2 2H7c-1 0-2-1-2-2V6"/><path d="M8 6V4c0-1 1-2 2-2h4c1 0 2 1 2 2v2"/><path d="M10 11v6"/><path d="M14 11v6"/></svg>
<div class="t" style="left:264.50px;top:658.55px;font-size:14.3px;color:#23272e;transform:scaleX(0.7769);transform-origin:0 0;-webkit-text-stroke:0.2px #23272e;">#PARK-00007</div>
<div class="t" style="left:393.00px;top:658.55px;font-size:14.3px;color:#23272e;transform:scaleX(0.8067);transform-origin:0 0;-webkit-text-stroke:0.2px #23272e;">MetroPark Zone</div>
<div class="t" style="left:574.50px;top:658.55px;font-size:14.3px;color:#23272e;transform:scaleX(0.8045);transform-origin:0 0;-webkit-text-stroke:0.2px #23272e;">Car</div>
<div class="t" style="left:661.00px;top:658.55px;font-size:14.3px;color:#23272e;transform:scaleX(0.8045);transform-origin:0 0;-webkit-text-stroke:0.2px #23272e;">G7</div>
<div class="t" style="left:822.61px;top:658.55px;font-size:14.3px;color:#23272e;transform:scaleX(0.8045);transform-origin:0 0;-webkit-text-stroke:0.2px #23272e;">624589</div>
<div class="t" style="left:881.00px;top:649.55px;font-size:14.3px;color:#23272e;transform:scaleX(0.8030);transform-origin:0 0;-webkit-text-stroke:0.2px #23272e;">Jan 17, 2024</div>
<div class="t" style="left:881.00px;top:666.55px;font-size:14.3px;color:#23272e;transform:scaleX(0.8045);transform-origin:0 0;-webkit-text-stroke:0.2px #23272e;">12:48 PM</div>
<div class="t" style="left:1003.00px;top:658.55px;font-size:14.3px;color:#23272e;transform:scaleX(0.8046);transform-origin:0 0;-webkit-text-stroke:0.2px #23272e;">-</div>
<div style="position:absolute;left:254px;top:697px;width:1292px;height:1px;background:#eeeff1;"></div>
<div style="position:absolute;left:1124px;top:663.7px;width:37px;height:15px;background:#fa4141;border-radius:2px;"></div>
<div class="t" style="left:1129.18px;top:660.81px;font-size:9.5px;color:#fff;transform:scaleX(0.8850);transform-origin:0 0;-webkit-text-stroke:0.4px #fff;">Unpaid</div>
<div style="position:absolute;left:1302px;top:663.7px;width:26.5px;height:15px;background:#fa4141;border-radius:2px;"></div>
<div class="t" style="left:1306.61px;top:660.81px;font-size:9.5px;color:#fff;transform:scaleX(0.8850);transform-origin:0 0;-webkit-text-stroke:0.4px #fff;">Park</div>
<svg style="position:absolute;left:1410.80px;top:659.90px" width="20" height="20" viewBox="0 0 24 24" fill="none" stroke="#f9b92b" stroke-width="1.8" stroke-linecap="round" stroke-linejoin="round"><path d="M9.7 12a2.3 2.3 0 1 0 4.6 0a2.3 2.3 0 0 0 -4.6 0"/><path d="M21 12c-2.4 4 -5.4 6 -9 6c-3.6 0 -6.6 -2 -9 -6c2.4 -4 5.4 -6 9 -6c3.6 0 6.6 2 9 6"/></svg>
<svg style="position:absolute;left:1440.80px;top:661.00px" width="18" height="18" viewBox="0 0 24 24" fill="none" stroke="#1ca696" stroke-width="1.8" stroke-linecap="round" stroke-linejoin="round"><path d="M12 3H5a2 2 0 0 0-2 2v14a2 2 0 0 0 2 2h14a2 2 0 0 0 2-2v-7"/><path d="M18.375 2.625a1 1 0 0 1 3 3l-9.013 9.014a2 2 0 0 1-.853.505l-2.873.84a.5.5 0 0 1-.62-.62l.84-2.873a2 2 0 0 1 .506-.852z"/></svg>
<svg style="position:absolute;left:1471.50px;top:661.60px" width="17" height="17" viewBox="0 0 24 24" fill="none" stroke="#fa3e3e" stroke-width="1.9" stroke-linecap="round" stroke-linejoin="round"><path d="M3 6h18"/><path d="M19 6v14c0 1-1 2-2 2H7c-1 0-2-1-2-2V6"/><path d="M8 6V4c0-1 1-2 2-2h4c1 0 2 1 2 2v2"/><path d="M10 11v6"/><path d="M14 11v6"/></svg>
<div class="t" style="left:260.00px;top:706.06px;font-size:13.1px;color:#23272e;transform:scaleX(0.8896);transform-origin:0 0;-webkit-text-stroke:0.2px #23272e;">Showing 1 to 7 of 7 entries</div>
<div style="position:absolute;left:1411px;top:709.3px;width:128.5px;height:28.7px;box-sizing:border-box;border:1px solid #dfe2e6;border-radius:5px;background:#fff;"></div>
<div style="position:absolute;left:1437px;top:709.3px;width:1px;height:28.7px;background:#e3e6ea;"></div>
<div style="position:absolute;left:1512.5px;top:709.3px;width:1px;height:28.7px;background:#e3e6ea;"></div>
<div style="position:absolute;left:1461px;top:709.3px;width:28.3px;height:28.7px;background:#0a2341;"></div>
<div class="t" style="left:1421.29px;top:713.09px;font-size:11px;color:#7b828c;transform:scaleX(0.8850);transform-origin:0 0;">«</div>
<div class="t" style="left:1447.38px;top:713.09px;font-size:11px;color:#7b828c;transform:scaleX(0.8850);transform-origin:0 0;">‹</div>
<div class="t" style="left:1472.00px;top:713.10px;font-size:13px;color:#fff;transform:scaleX(0.8850);transform-origin:0 0;">1</div>
<div class="t" style="left:1499.38px;top:713.09px;font-size:11px;color:#7b828c;transform:scaleX(0.8850);transform-origin:0 0;">›</div>
<div class="t" style="left:1523.29px;top:713.09px;font-size:11px;color:#7b828c;transform:scaleX(0.8850);transform-origin:0 0;">»</div>
<div class="t" style="left:250.30px;top:863.76px;font-size:13.4px;color:#23272e;transform:scaleX(0.8530);transform-origin:0 0;-webkit-text-stroke:0.2px #23272e;">Copyright 2025 © Easy Park SaaS All rights reserved.</div>
<div class="t" style="left:1381.00px;top:863.36px;font-size:13.4px;color:#23272e;transform:scaleX(0.8633);transform-origin:0 0;-webkit-text-stroke:0.2px #23272e;">Privacy Policy</div>
<div class="t" style="left:1465.50px;top:863.36px;font-size:13.4px;color:#23272e;transform:scaleX(0.8651);transform-origin:0 0;-webkit-text-stroke:0.2px #23272e;">Terms &amp; Conditions</div>
</body></html>
